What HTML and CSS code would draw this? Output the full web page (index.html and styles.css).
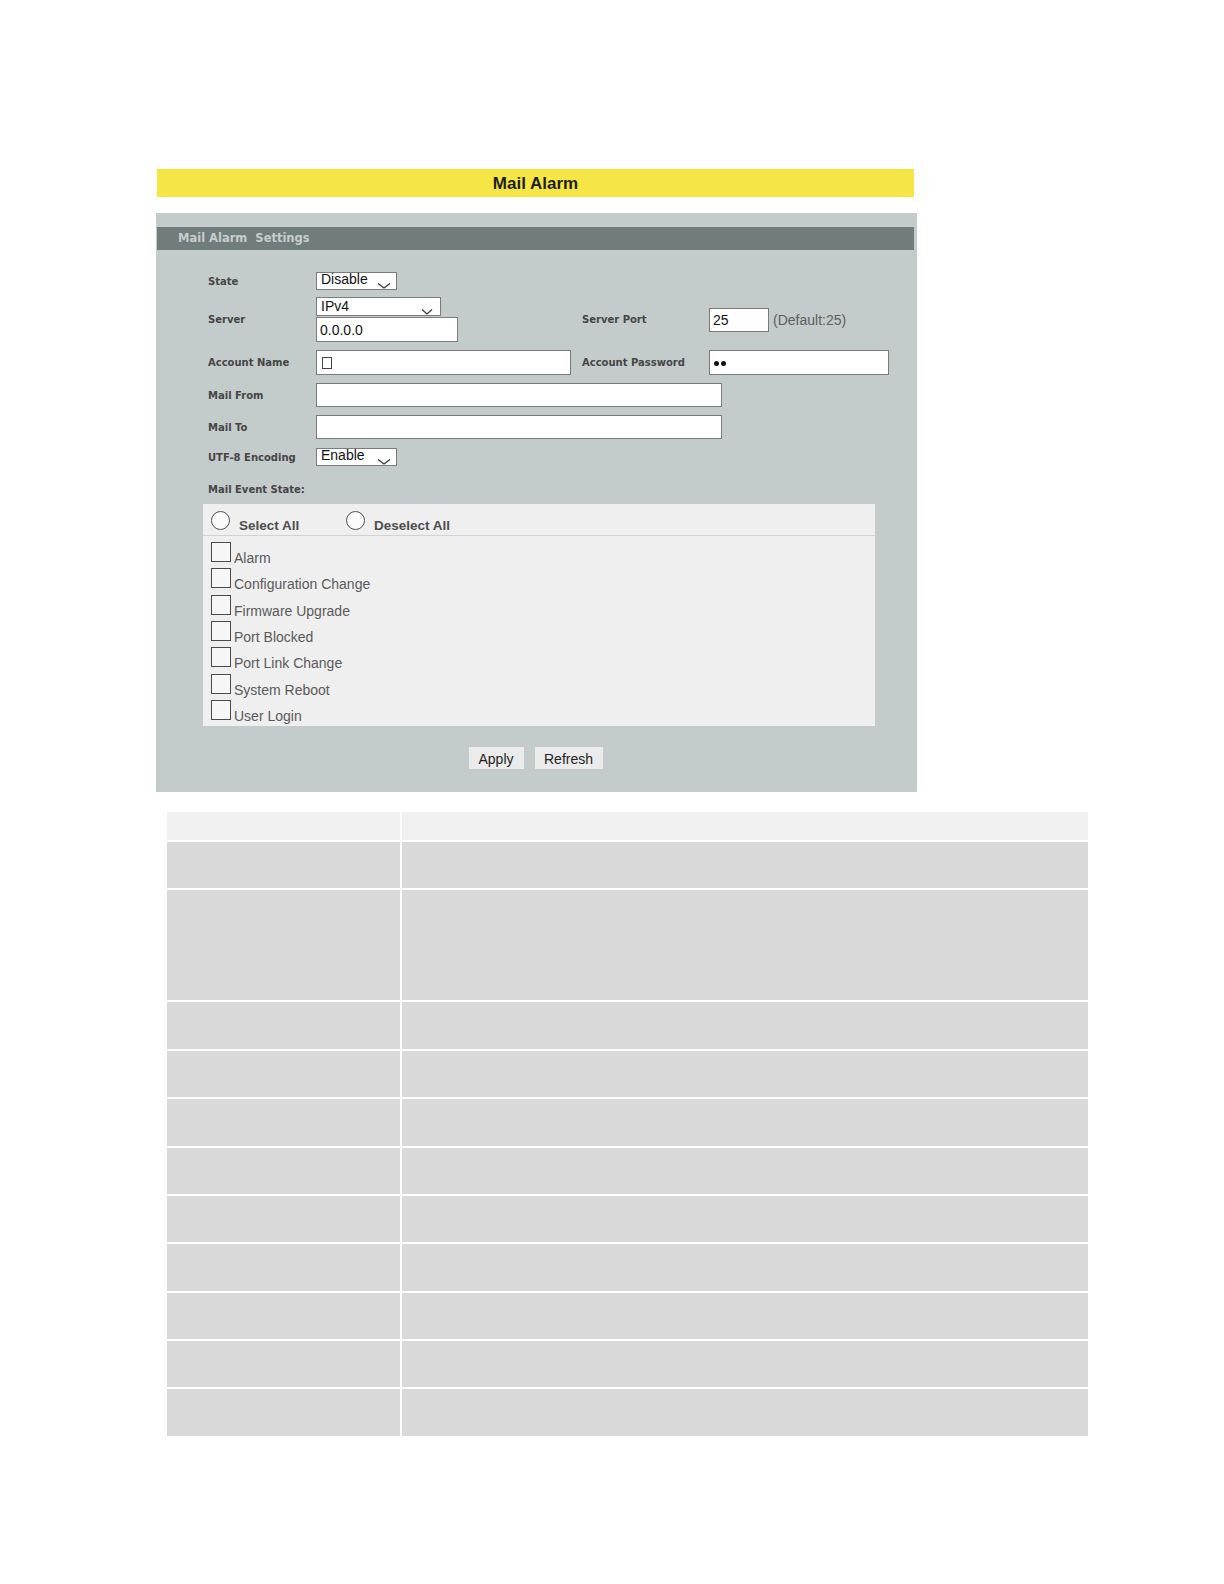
FILE: index.html
```html
<!DOCTYPE html>
<html>
<head>
<meta charset="utf-8">
<title>Mail Alarm</title>
<link rel="stylesheet" href="styles.css">
</head>
<body>
<div class="page">
  <div class="title-bar">Mail Alarm</div>

  <div class="panel">
    <div class="panel-head">Mail Alarm&nbsp; Settings</div>
    <div class="form">
      <div class="row row-state">
        <div class="lbl">State</div>
        <div class="select sel-short"><span class="sel-text">Disable</span><svg class="chev" width="14" height="6" viewBox="0 0 14 6"><polyline points="1,0.5 7,5 13,0.5" fill="none" stroke="#333" stroke-width="1.2"/></svg></div>
      </div>

      <div class="row row-server">
        <div class="lbl">Server</div>
        <div class="col1">
          <div class="select sel-ip"><span class="sel-text sel-text-ip">IPv4</span><svg class="chev chev-ip" width="12" height="6" viewBox="0 0 12 6"><polyline points="1,0.5 6,5 11,0.5" fill="none" stroke="#333" stroke-width="1.2"/></svg></div>
          <div class="input in-ip">0.0.0.0</div>
        </div>
        <div class="lbl2">Server Port</div>
        <div class="input in-port">25</div>
        <div class="hint">(Default:25)</div>
      </div>

      <div class="row row-account">
        <div class="lbl">Account Name</div>
        <div class="col1">
          <div class="input in-name"><span class="tiny-box"></span></div>
        </div>
        <div class="lbl2">Account Password</div>
        <div class="input in-pw"><span class="dot"></span><span class="dot"></span></div>
      </div>

      <div class="row row-from">
        <div class="lbl">Mail From</div>
        <div class="input in-wide"></div>
      </div>

      <div class="row row-to">
        <div class="lbl">Mail To</div>
        <div class="input in-wide in-to"></div>
      </div>

      <div class="row row-utf">
        <div class="lbl">UTF-8 Encoding</div>
        <div class="select sel-short"><span class="sel-text">Enable</span><svg class="chev" width="14" height="6" viewBox="0 0 14 6"><polyline points="1,0.5 7,5 13,0.5" fill="none" stroke="#333" stroke-width="1.2"/></svg></div>
      </div>

      <div class="row row-event">
        <div class="lbl lbl-event">Mail Event State:</div>
      </div>

      <div class="event-box">
        <div class="event-head">
          <div class="radio-group rg-first"><span class="radio"></span><span class="radio-text">Select All</span></div>
          <div class="radio-group"><span class="radio"></span><span class="radio-text">Deselect All</span></div>
        </div>
        <div class="event-list">
          <div class="item"><span class="cb"></span><span class="item-text">Alarm</span></div>
          <div class="item"><span class="cb"></span><span class="item-text">Configuration Change</span></div>
          <div class="item"><span class="cb"></span><span class="item-text">Firmware Upgrade</span></div>
          <div class="item"><span class="cb"></span><span class="item-text">Port Blocked</span></div>
          <div class="item"><span class="cb"></span><span class="item-text">Port Link Change</span></div>
          <div class="item"><span class="cb"></span><span class="item-text">System Reboot</span></div>
          <div class="item"><span class="cb"></span><span class="item-text">User Login</span></div>
        </div>
      </div>

      <div class="buttons">
        <div class="btn btn-apply">Apply</div>
        <div class="btn btn-refresh">Refresh</div>
      </div>
    </div>
  </div>

  <div class="desc">
    <div class="cell head"></div><div class="cell head"></div>
    <div class="cell r"></div><div class="cell r"></div>
    <div class="cell r tall"></div><div class="cell r tall"></div>
    <div class="cell r"></div><div class="cell r"></div>
    <div class="cell r"></div><div class="cell r"></div>
    <div class="cell r"></div><div class="cell r"></div>
    <div class="cell r"></div><div class="cell r"></div>
    <div class="cell r"></div><div class="cell r"></div>
    <div class="cell r"></div><div class="cell r"></div>
    <div class="cell r"></div><div class="cell r"></div>
    <div class="cell r"></div><div class="cell r"></div>
    <div class="cell r"></div><div class="cell r"></div>
  </div>
</div>
</body>
</html>
```

FILE: styles.css
```css
html, body {
  margin: 0;
  padding: 0;
  background: #ffffff;
}

body {
  font-family: "Liberation Sans", Arial, sans-serif;
  color: #222;
}

.page {
  padding-top: 169px;
  padding-left: 156px;
  padding-bottom: 40px;
}

.title-bar {
  margin-left: 1px;
  width: 757px;
  height: 28px;
  box-sizing: border-box;
  padding-top: 2px;
  background: #f5e646;
  color: #1e1e1e;
  font-weight: bold;
  font-size: 17px;
  line-height: 26px;
  text-align: center;
}

.panel {
  margin-top: 16px;
  width: 757px;
  padding: 14px 3px 22px 1px;
  background: #c4cbcb;
}

.panel-head {
  height: 23px;
  line-height: 23px;
  background: #717c7c;
  color: #c7cdcd;
  font-family: "DejaVu Sans", sans-serif;
  font-weight: bold;
  font-size: 11.5px;
  padding-left: 21px;
}

.form {
  padding-left: 46px;
}

.row {
  display: flex;
  align-items: center;
  padding-left: 5px;
}

.lbl {
  width: 108px;
  flex: none;
  font-family: "DejaVu Sans", sans-serif;
  font-weight: bold;
  font-size: 10px;
  color: #454545;
}

.lbl2 {
  width: 127px;
  flex: none;
  font-family: "DejaVu Sans", sans-serif;
  font-weight: bold;
  font-size: 10px;
  color: #454545;
}

.col1 {
  width: 266px;
  flex: none;
  display: flex;
  flex-direction: column;
}

.row-state { margin-top: 22px; }
.row-server { margin-top: 7px; }
.row-account { margin-top: 8px; }
.row-from { margin-top: 8px; }
.row-to { margin-top: 8px; }
.row-utf { margin-top: 9px; }
.row-event { margin-top: 17px; height: 14px; }

.select {
  box-sizing: border-box;
  background: #fff;
  border: 1px solid #7b7b7b;
  display: flex;
  justify-content: space-between;
  padding-left: 4px;
  font-size: 14px;
  color: #111;
}

.sel-text {
  align-self: flex-start;
  line-height: 13px;
  margin-top: 0px;
}

.sel-text-ip {
  margin-top: 2px;
}

.chev {
  align-self: flex-end;
  margin-right: 5px;
  margin-bottom: 0px;
}

.chev-ip {
  margin-right: 7px;
}

.sel-short {
  width: 81px;
  height: 18px;
}

.sel-ip {
  width: 125px;
  height: 19px;
}

.input {
  box-sizing: border-box;
  background: #fff;
  border: 1px solid #7b7b7b;
  padding-left: 3px;
  font-size: 14px;
  color: #111;
  display: flex;
  align-items: center;
}

.in-ip {
  width: 142px;
  height: 25px;
  margin-top: 1px;
}

.in-port {
  width: 60px;
  height: 24px;
}

.hint {
  margin-left: 4px;
  font-size: 14px;
  color: #5e5e5e;
}

.in-name {
  width: 255px;
  height: 25px;
}

.tiny-box {
  display: block;
  width: 8px;
  height: 10px;
  border: 1px solid #444;
  margin-left: 2px;
}

.in-pw {
  width: 180px;
  height: 25px;
  padding-left: 4px;
  gap: 2px;
}

.dot {
  display: block;
  width: 5px;
  height: 5px;
  border-radius: 50%;
  background: #111;
  margin-top: 2px;
}

.in-wide {
  width: 406px;
  height: 24px;
}

.in-to {
  height: 24px;
}

.lbl-event {
  width: auto;
  line-height: 14px;
}

.event-box {
  margin-top: 7px;
  width: 672px;
  background: #efefef;
}

.event-head {
  height: 32px;
  box-sizing: border-box;
  display: flex;
  align-items: flex-end;
  padding-left: 8px;
  padding-bottom: 5px;
  border-bottom: 1px solid #d2d2d2;
}

.radio-group {
  display: flex;
  align-items: flex-end;
}

.rg-first {
  width: 135px;
}

.radio {
  display: block;
  box-sizing: border-box;
  width: 19px;
  height: 19px;
  border: 1.5px solid #505050;
  border-radius: 50%;
  background: #fbfbfb;
}

.radio-text {
  margin-left: 9px;
  font-weight: bold;
  font-size: 13.5px;
  line-height: 15px;
  color: #4e4e4e;
  margin-bottom: -3px;
}

.event-list {
  padding: 6px 0 6px 8px;
}

.item {
  display: flex;
  align-items: flex-end;
  height: 20px;
}

.item + .item {
  margin-top: 6.33px;
}

.cb {
  display: block;
  box-sizing: border-box;
  width: 20px;
  height: 20px;
  border: 1.5px solid #4a4a4a;
  background: #f6f6f6;
  flex: none;
}

.item-text {
  margin-left: 3px;
  font-size: 14px;
  line-height: 16px;
  color: #5a5a5a;
  margin-bottom: -4px;
}

.buttons {
  margin-left: -46px;
  margin-top: 20px;
  display: flex;
  justify-content: center;
  gap: 9px;
}

.btn {
  box-sizing: border-box;
  height: 24px;
  background: #ebebeb;
  border: 1px solid #c8c8c8;
  font-size: 14px;
  line-height: 23px;
  padding-top: 1px;
  color: #222;
  text-align: center;
}

.btn-apply { width: 57px; }
.btn-refresh { width: 70px; }

.desc {
  margin-top: 20px;
  margin-left: 11px;
  display: grid;
  grid-template-columns: 233px 686px;
  column-gap: 2px;
  row-gap: 2px;
}

.cell.head {
  height: 28px;
  background: #f1f1f1;
}

.cell.r {
  height: 46.4px;
  background: #d9d9d9;
}

.cell.r.tall {
  height: 110px;
}
```
